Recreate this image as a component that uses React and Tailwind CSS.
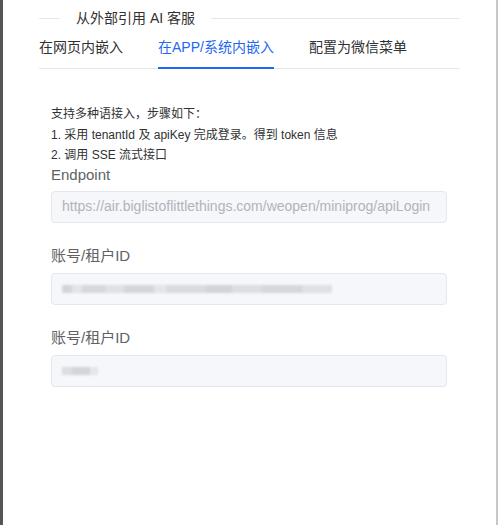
import React from "react";

const font = { fontFamily: '"Liberation Sans", Arial, "Noto Sans CJK SC", sans-serif' };

const Field = ({ label, children }) => (
  <div className="flex flex-col">
    <div className="h-[33px] flex items-center text-[15px] text-[#606266]">{label}</div>
    {children}
  </div>
);

const Blur = ({ w }) => (
  <div className="flex items-center h-full blur-[1.2px]">
    {w.map(([x, c], i) => (
      <div key={i} className="h-[8px]" style={{ width: x, background: c }} />
    ))}
  </div>
);

export default function App() {
  const tabs = ["在网页内嵌入", "在APP/系统内嵌入", "配置为微信菜单"];
  return (
    <div className="flex h-[525px] w-full bg-white" style={font}>
      <div className="w-[3px] bg-[#555555]" />
      <div className="flex-1 px-9">
        <div className="flex items-center h-[36px]">
          <div className="w-[21px] h-px bg-[#e4e7ed]" />
          <div className="px-4 text-[14px] text-[#303133]">从外部引用 AI 客服</div>
          <div className="flex-1 h-px bg-[#e4e7ed]" />
        </div>
        <div className="flex gap-[35px] border-b border-[#e4e7ed] h-[33px]">
          {tabs.map((t, i) => (
            <div
              key={t}
              className={`text-[14px] leading-[22px] border-b-2 -mb-px ${
                i === 1 ? "text-[#2468f2] border-[#2468f2]" : "text-[#303133] border-transparent"
              }`}
            >
              {t}
            </div>
          ))}
        </div>
        <div className="px-3 pt-[35px] pr-[13px]">
          <div className="text-[12px] leading-[20.5px] text-[#303133]">
            <div>支持多种语接入，步骤如下：</div>
            <div>1. 采用 tenantId 及 apiKey 完成登录。得到 token 信息</div>
            <div>2. 调用 SSE 流式接口</div>
          </div>
          <div className="text-[15px] leading-[20px] text-[#606266] -mt-px">Endpoint</div>
          <div className="mt-[6px] h-[32px] rounded border border-[#e4e7ed] bg-[#f5f7fa] px-[10px] flex items-center text-[14px] text-[#b1b4ba]">
            https://air.biglistoflittlethings.com/weopen/miniprog/apiLogin
          </div>
          <div className="mt-[17px]">
            <Field label="账号/租户ID">
              <div className="h-[32px] rounded border border-[#e4e7ed] bg-[#f5f7fa] px-[10px]">
                <Blur
                  w={[
                    [10, "#d3d5da"], [10, "#e2e4e8"], [24, "#d6d8dc"], [18, "#dfe1e5"],
                    [30, "#d4d6db"], [12, "#e3e5e9"], [40, "#d9dbdf"], [26, "#d2d4d9"],
                    [30, "#dcdee2"], [40, "#d5d7dc"], [30, "#dfe1e5"],
                  ]}
                />
              </div>
            </Field>
          </div>
          <div className="mt-[17px]">
            <Field label="账号/租户ID">
              <div className="h-[32px] rounded border border-[#e4e7ed] bg-[#f5f7fa] px-[10px]">
                <Blur w={[[10, "#dcdee2"], [18, "#d3d5da"], [8, "#e4e6ea"]]} />
              </div>
            </Field>
          </div>
        </div>
      </div>
      <div className="w-[2px] bg-[#c8c8c8]" />
    </div>
  );
}
